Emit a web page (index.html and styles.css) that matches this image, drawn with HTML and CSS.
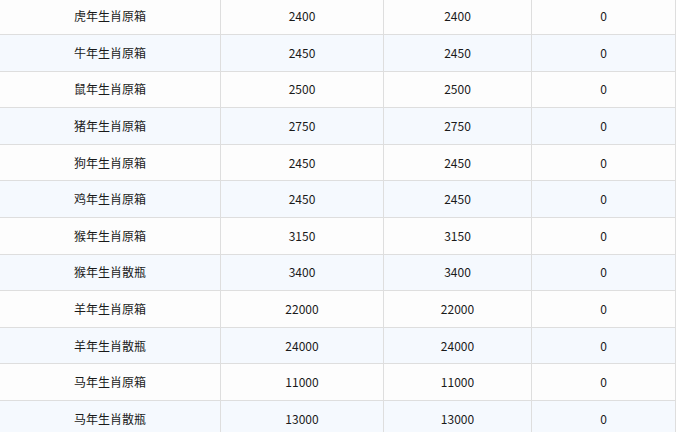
FILE: index.html
```html
<!DOCTYPE html>
<html>
<head>
<meta charset="utf-8">
<link rel="stylesheet" href="styles.css">
</head>
<body>
<div class="table">
  <div class="row"><div class="cell">虎年生肖原箱</div><div class="cell">2400</div><div class="cell">2400</div><div class="cell">0</div></div>
  <div class="row"><div class="cell">牛年生肖原箱</div><div class="cell">2450</div><div class="cell">2450</div><div class="cell">0</div></div>
  <div class="row"><div class="cell">鼠年生肖原箱</div><div class="cell">2500</div><div class="cell">2500</div><div class="cell">0</div></div>
  <div class="row"><div class="cell">猪年生肖原箱</div><div class="cell">2750</div><div class="cell">2750</div><div class="cell">0</div></div>
  <div class="row"><div class="cell">狗年生肖原箱</div><div class="cell">2450</div><div class="cell">2450</div><div class="cell">0</div></div>
  <div class="row"><div class="cell">鸡年生肖原箱</div><div class="cell">2450</div><div class="cell">2450</div><div class="cell">0</div></div>
  <div class="row"><div class="cell">猴年生肖原箱</div><div class="cell">3150</div><div class="cell">3150</div><div class="cell">0</div></div>
  <div class="row"><div class="cell">猴年生肖散瓶</div><div class="cell">3400</div><div class="cell">3400</div><div class="cell">0</div></div>
  <div class="row"><div class="cell">羊年生肖原箱</div><div class="cell">22000</div><div class="cell">22000</div><div class="cell">0</div></div>
  <div class="row"><div class="cell">羊年生肖散瓶</div><div class="cell">24000</div><div class="cell">24000</div><div class="cell">0</div></div>
  <div class="row"><div class="cell">马年生肖原箱</div><div class="cell">11000</div><div class="cell">11000</div><div class="cell">0</div></div>
  <div class="row"><div class="cell">马年生肖散瓶</div><div class="cell">13000</div><div class="cell">13000</div><div class="cell">0</div></div>
</div>
</body>
</html>
```
FILE: styles.css
```css
html, body {
  margin: 0;
  padding: 0;
  background: #fdfdfd;
  overflow: hidden;
}
.table {
  width: 676px;
  margin-top: -1.6px;
  font-family: "Noto Sans CJK SC", "Noto Sans", sans-serif;
  font-size: 12px;
  color: #1a1a1a;
}
.row {
  display: grid;
  grid-template-columns: 221px 163px 148px 1fr;
  height: 36.6px;
  box-sizing: border-box;
  border-bottom: 1px solid #dedede;
  background: #fdfdfd;
}
.row:nth-child(even) {
  background: #f5f9fe;
}
.cell {
  display: flex;
  align-items: center;
  justify-content: center;
  padding-bottom: 1px;
  border-right: 1px solid #dedede;
  box-sizing: border-box;
}
```
